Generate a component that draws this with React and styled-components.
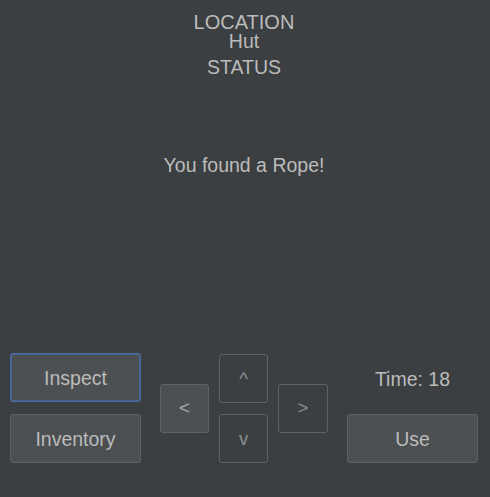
import React from "react";
import styled, { createGlobalStyle } from "styled-components";

const Global = createGlobalStyle`
  html, body {
    margin: 0;
    padding: 0;
    background: #3c3f41;
  }
`;

const Screen = styled.div`
  width: 490px;
  height: 497px;
  background: #3c3f41;
  color: #bbbbbb;
  font-family: "Liberation Sans", Arial, sans-serif;
  font-size: 19.5px;
  display: flex;
  flex-direction: column;
  box-sizing: border-box;
  padding: 13px 12px 34px 10px;
`;

const Header = styled.div`
  display: flex;
  flex-direction: column;
  align-items: center;
  line-height: 19px;
`;

const Location = styled.div`
  font-size: 20px;
`;

const Status = styled.div`
  margin-top: 7px;
`;

const Message = styled.div`
  flex: 1;
  text-align: center;
  line-height: 19px;
  padding-top: 79px;
`;

const Controls = styled.div`
  display: flex;
  align-items: stretch;
  height: 110px;
`;

const Column = styled.div`
  flex: 0 0 131px;
  display: flex;
  flex-direction: column;
  gap: 12px;
`;

const Button = styled.button`
  height: 49px;
  width: 100%;
  box-sizing: border-box;
  font-family: inherit;
  font-size: 19.5px;
  color: #bbbbbb;
  background: #4c5052;
  border: 1px solid ${(p) => (p.$focused ? "#4a6da7" : "#5e6162")};
  box-shadow: ${(p) => (p.$focused ? "inset 0 0 0 1px #466290" : "none")};
  border-radius: 3px;
  padding: 0;
  padding-top: 1px;
`;

const Pad = styled.div`
  flex: 0 0 auto;
  display: flex;
  align-items: center;
  gap: 10px;
  margin: 0 19px;
`;

const PadMiddle = styled.div`
  display: flex;
  flex-direction: column;
  gap: 11px;
  padding-top: 1px;
`;

const Arrow = styled.button`
  width: ${(p) => (p.$wide ? "50px" : "49px")};
  height: 49px;
  box-sizing: border-box;
  font-family: inherit;
  font-size: 18.5px;
  padding: 0;
  border-radius: 3px;
  border: 1px solid #5e6264;
  background: ${(p) => (p.$enabled ? "#4c5052" : "transparent")};
  color: ${(p) => (p.$enabled ? "#a9acae" : "#8d9092")};
`;

const TimeLabel = styled.div`
  height: 49px;
  display: flex;
  align-items: center;
  justify-content: center;
  padding-top: 3px;
  box-sizing: border-box;
`;

export default function App() {
  return (
    <>
      <Global />
      <Screen>
        <Header>
          <Location>LOCATION</Location>
          <div>Hut</div>
          <Status>STATUS</Status>
        </Header>
        <Message>You found a Rope!</Message>
        <Controls>
          <Column>
            <Button $focused>Inspect</Button>
            <Button>Inventory</Button>
          </Column>
          <Pad>
            <Arrow $enabled>&lt;</Arrow>
            <PadMiddle>
              <Arrow>^</Arrow>
              <Arrow>v</Arrow>
            </PadMiddle>
            <Arrow $wide>&gt;</Arrow>
          </Pad>
          <Column>
            <TimeLabel>Time: 18</TimeLabel>
            <Button>Use</Button>
          </Column>
        </Controls>
      </Screen>
    </>
  );
}
